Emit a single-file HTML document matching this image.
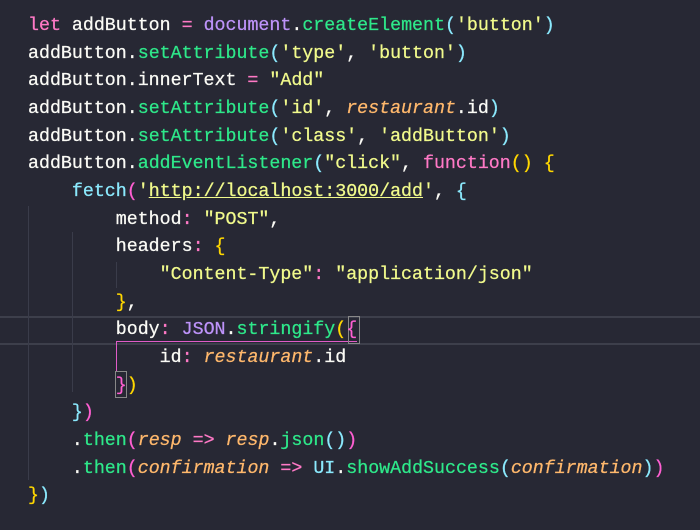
<!DOCTYPE html>
<html><head><style>
html,body{margin:0;padding:0;background:#272834;width:700px;height:530px;overflow:hidden;position:relative}
pre{position:absolute;left:28px;top:13px;margin:0;font-family:"Liberation Mono",monospace;font-size:18.3px;line-height:27.65px;color:#fbfbf6;z-index:2;-webkit-text-stroke:0.25px currentColor}
.k{color:#ff79c6}.p{color:#bd93f9}.g{color:#2ee88a}.s{color:#f1fa8c}.o{color:#ffb86c;font-style:italic}.c{color:#8be9fd}.y{color:#ffd700}.m{color:#ff5fd2}.u{text-decoration:underline}
.gl{position:absolute;width:1px;background:#3a3c4a}
</style></head><body>
<div style="position:absolute;left:0;top:316px;width:700px;height:25px;border-top:2px solid #3d3f4b;border-bottom:2px solid #3d3f4b"></div>
<div class="gl" style="left:28px;top:206px;height:274px"></div>
<div class="gl" style="left:72px;top:232px;height:160px"></div>
<div class="gl" style="left:116px;top:262px;height:26px"></div>
<div style="position:absolute;left:116px;top:341px;width:241px;height:1px;background:#e05cc8"></div>
<div style="position:absolute;left:116px;top:341px;width:1px;height:30px;background:#e05cc8"></div>
<div style="position:absolute;left:348px;top:316px;width:10px;height:26px;border:1px solid #888"></div>
<div style="position:absolute;left:115px;top:371px;width:10px;height:25px;border:1px solid #888"></div>
<pre><span class="k">let</span> addButton <span class="k">=</span> <span class="p">document</span>.<span class="g">createElement</span><span class="c">(</span><span class="s">'button'</span><span class="c">)</span>
addButton.<span class="g">setAttribute</span><span class="c">(</span><span class="s">'type'</span>, <span class="s">'button'</span><span class="c">)</span>
addButton.innerText <span class="k">=</span> <span class="s">"Add"</span>
addButton.<span class="g">setAttribute</span><span class="c">(</span><span class="s">'id'</span>, <span class="o">restaurant</span>.id<span class="c">)</span>
addButton.<span class="g">setAttribute</span><span class="c">(</span><span class="s">'class'</span>, <span class="s">'addButton'</span><span class="c">)</span>
addButton.<span class="g">addEventListener</span><span class="c">(</span><span class="s">"click"</span>, <span class="k">function</span><span class="y">()</span> <span class="y">{</span>
    <span class="c">fetch</span><span class="m">(</span><span class="s">'<span class="u">http://localhost:3000/add</span>'</span>, <span class="c">{</span>
        method<span class="k">:</span> <span class="s">"POST"</span>,
        headers<span class="k">:</span> <span class="y">{</span>
            <span class="s">"Content-Type"</span><span class="k">:</span> <span class="s">"application/json"</span>
        <span class="y">}</span>,
        body<span class="k">:</span> <span class="p">JSON</span>.<span class="g">stringify</span><span class="y">(</span><span class="m">{</span>
            id<span class="k">:</span> <span class="o">restaurant</span>.id
        <span class="m">}</span><span class="y">)</span>
    <span class="c">}</span><span class="m">)</span>
    .<span class="g">then</span><span class="m">(</span><span class="o">resp</span> <span class="k">=&gt;</span> <span class="o">resp</span>.<span class="g">json</span><span class="c">()</span><span class="m">)</span>
    .<span class="g">then</span><span class="m">(</span><span class="o">confirmation</span> <span class="k">=&gt;</span> <span class="c">UI</span>.<span class="g">showAddSuccess</span><span class="c">(</span><span class="o">confirmation</span><span class="c">)</span><span class="m">)</span>
<span class="y">}</span><span class="c">)</span></pre>
</body></html>
